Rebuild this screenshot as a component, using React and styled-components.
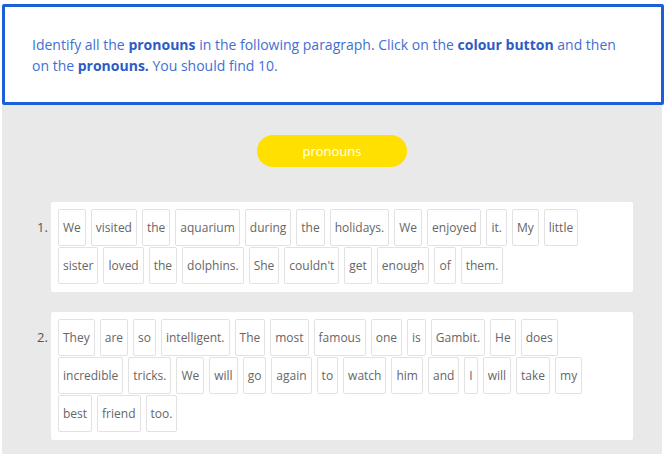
import React from "react";
import styled, { createGlobalStyle } from "styled-components";

const GlobalStyle = createGlobalStyle`
  html, body {
    margin: 0;
    padding: 0;
    background: #ffffff;
  }
  body {
    font-family: "Open Sans", "Liberation Sans", sans-serif;
  }
`;

const Colors = {
  blue: "#1d5fd6",
  text: "#3f6fd2",
  textBold: "#2c5cc4",
  gray: "#e9e9e9",
  yellow: "#ffe000",
  chipBorder: "#e2e2e2",
  chipText: "#666666",
};

const paragraphs = [
  [
    ["We", "visited", "the", "aquarium", "during", "the", "holidays.", "We", "enjoyed", "it.", "My", "little"],
    ["sister", "loved", "the", "dolphins.", "She", "couldn't", "get", "enough", "of", "them."],
  ],
  [
    ["They", "are", "so", "intelligent.", "The", "most", "famous", "one", "is", "Gambit.", "He", "does"],
    ["incredible", "tricks.", "We", "will", "go", "again", "to", "watch", "him", "and", "I", "will", "take", "my"],
    ["best", "friend", "too."],
  ],
];

const App = () => {
  return (
    <Page>
      <GlobalStyle />
      <Instructions>
        <InstructionText>
          Identify all the <Strong>pronouns</Strong> in the following paragraph. Click on the{" "}
          <Strong>colour button</Strong> and then on the <Strong>pronouns.</Strong> You should find 10.
        </InstructionText>
      </Instructions>

      <Workspace>
        <ButtonRow>
          <ColourButton>pronouns</ColourButton>
        </ButtonRow>

        {paragraphs.map((lines, i) => (
          <Item key={i}>
            <ItemNumber>{i + 1}.</ItemNumber>
            <Card>
              {lines.map((words, j) => (
                <WordLine key={j}>
                  {words.map((w, k) => (
                    <Word key={k}>{w}</Word>
                  ))}
                </WordLine>
              ))}
            </Card>
          </Item>
        ))}
      </Workspace>
    </Page>
  );
};

export default App;

const Page = styled.div`
  width: 662px;
  margin: 4px 0 0 2px;
  display: flex;
  flex-direction: column;
`;

const Instructions = styled.div`
  border: 3px solid ${Colors.blue};
  border-radius: 2px;
  background: #fff;
  padding: 27px 27px 26px;
`;

const InstructionText = styled.p`
  margin: 0;
  max-width: 598px;
  font-size: 14px;
  line-height: 21px;
  color: ${Colors.text};
`;

const Strong = styled.b`
  font-weight: 700;
  color: ${Colors.textBold};
`;

const Workspace = styled.div`
  background: ${Colors.gray};
  width: 660px;
  padding: 30px 0 20px;
  display: flex;
  flex-direction: column;
  gap: 20px;
  min-height: 330px;
`;

const ButtonRow = styled.div`
  display: flex;
  justify-content: center;
  margin-bottom: 15px;
`;

const ColourButton = styled.button`
  width: 150px;
  height: 32px;
  border: none;
  border-radius: 16px;
  background: ${Colors.yellow};
  color: #fff;
  font-family: "Open Sans", "Liberation Sans", sans-serif;
  font-size: 13px;
  font-weight: 500;
  cursor: pointer;
`;

const Item = styled.div`
  display: flex;
  align-items: flex-start;
  padding-left: 35px;
`;

const ItemNumber = styled.div`
  width: 14px;
  padding-top: 16px;
  font-size: 13px;
  color: #555;
`;

const Card = styled.div`
  width: 568px;
  background: #fff;
  border-radius: 2px;
  padding: 7px 7px 8px;
  display: flex;
  flex-direction: column;
  gap: 1px;
`;

const WordLine = styled.div`
  display: flex;
  gap: 5px;
`;

const Word = styled.span`
  height: 35px;
  display: flex;
  align-items: center;
  padding: 0 4px;
  border: 1px solid ${Colors.chipBorder};
  border-radius: 2px;
  font-size: 12px;
  color: ${Colors.chipText};
  cursor: pointer;
`;
